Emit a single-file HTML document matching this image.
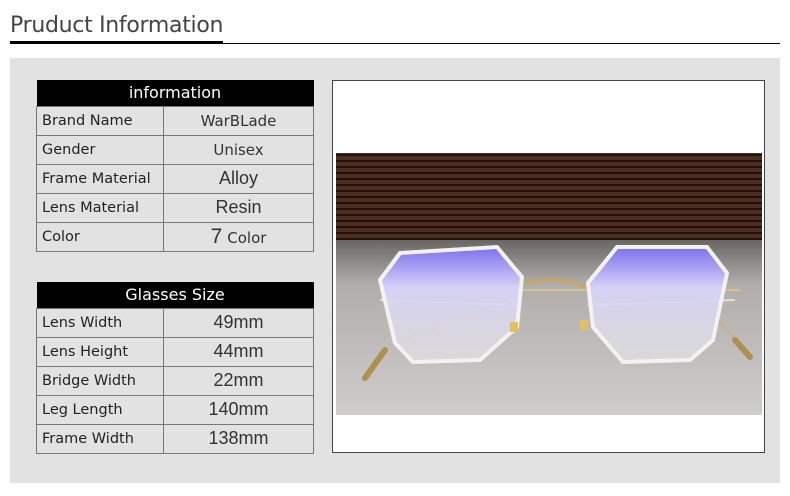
<!DOCTYPE html>
<html><head><meta charset="utf-8"><style>
*{margin:0;padding:0;box-sizing:border-box}
body{width:790px;height:496px;background:#fff;position:relative;overflow:hidden;font-family:"DejaVu Sans","Liberation Sans",sans-serif}
.title{position:absolute;left:10px;top:13px;font-size:22px;color:#444;letter-spacing:-0.3px;font-family:"DejaVu Sans",sans-serif;font-weight:normal}
.ul1{position:absolute;left:10px;top:41px;width:213px;height:3px;background:#000}
.ul2{position:absolute;left:10px;top:43px;width:770px;height:1px;background:#000}
.panel{position:absolute;left:10px;top:58px;width:770px;height:425px;background:#e3e2e2}
table{position:absolute;left:36px;width:278px;border-collapse:collapse}
th{background:#000;color:#fff;font-weight:normal;font-size:16px;height:26px;text-align:center}
td{border:1px solid #777;height:29px;font-size:14.5px;color:#222;padding-left:5px}
td.v{text-align:center;font-family:"Liberation Sans",sans-serif;font-size:18px;color:#333;padding:0}
td.k{width:127px}
.frame{position:absolute;left:332px;top:80px;width:433px;height:373px;background:#fff;border:1px solid #444}
.photo{position:absolute;left:336px;top:153px;width:426px;height:262px}
</style></head><body>
<div class="title">Pruduct Information</div>
<div class="ul2"></div><div class="ul1"></div>
<div class="panel"></div>
<table style="top:80px">
<tr><th colspan="2">information</th></tr>
<tr><td class="k">Brand Name</td><td class="v" style="font-size:15px;font-family:'DejaVu Sans',sans-serif">WarBLade</td></tr>
<tr><td class="k">Gender</td><td class="v" style="font-size:15px;font-family:'DejaVu Sans',sans-serif">Unisex</td></tr>
<tr><td class="k">Frame Material</td><td class="v">Alloy</td></tr>
<tr><td class="k">Lens Material</td><td class="v">Resin</td></tr>
<tr><td class="k">Color</td><td class="v"><span style="font-size:21px">7</span> <span style="font-size:15px;font-family:'DejaVu Sans',sans-serif">Color</span></td></tr>
</table>
<table style="top:282px">
<tr><th colspan="2">Glasses Size</th></tr>
<tr><td class="k">Lens Width</td><td class="v">49mm</td></tr>
<tr><td class="k">Lens Height</td><td class="v">44mm</td></tr>
<tr><td class="k">Bridge Width</td><td class="v">22mm</td></tr>
<tr><td class="k">Leg Length</td><td class="v">140mm</td></tr>
<tr><td class="k">Frame Width</td><td class="v">138mm</td></tr>
</table>
<div class="frame"></div>
<svg class="photo" viewBox="336 153 426 262" width="426" height="262">
<defs>
<linearGradient id="cl" x1="0" y1="0" x2="0" y2="1"><stop offset="0" stop-color="#6a6664"/><stop offset="0.25" stop-color="#b0adab"/><stop offset="1" stop-color="#cfcdcb"/></linearGradient>
<linearGradient id="ln" x1="0" y1="0" x2="0" y2="1"><stop offset="0" stop-color="#7c70ee"/><stop offset="0.35" stop-color="#d4d0f6"/><stop offset="1" stop-color="#f0eff2" stop-opacity="0.5"/></linearGradient>
<pattern id="sl" width="426" height="6" patternUnits="userSpaceOnUse"><rect width="426" height="6" fill="#4e2e22"/><rect y="4" width="426" height="2" fill="#22120c"/></pattern>
</defs>
<rect x="336" y="153" width="426" height="90" fill="url(#sl)"/>
<rect x="336" y="240" width="426" height="175" fill="url(#cl)"/>
<path d="M500 290 Q560 270 590 290" stroke="#c8a860" stroke-width="3" fill="none"/>
<path d="M380 290 L740 290" stroke="#d8c090" stroke-width="2"/>
<path d="M380 300 L520 305 M588 305 L735 300" stroke="#e8e0d0" stroke-width="2"/>
<path d="M400 340 L522 300 M700 300 L745 350" stroke="#c8b080" stroke-width="1.5"/>
<polygon points="400,253 497,247 522,277 517,327 480,360 413,362 395,343 380,280" fill="url(#ln)" stroke="#f4f2f0" stroke-width="4"/>
<polygon points="617,247 707,247 727,273 713,340 690,360 623,362 593,327 588,283" fill="url(#ln)" stroke="#f4f2f0" stroke-width="4"/>
<rect x="510" y="322" width="8" height="10" fill="#e0c060"/><rect x="580" y="320" width="8" height="10" fill="#e0c060"/>
<path d="M365 378 L385 350" stroke="#b09050" stroke-width="6" stroke-linecap="round"/>
<path d="M750 357 L735 340" stroke="#b09050" stroke-width="6" stroke-linecap="round"/>
</svg>
</body></html>
